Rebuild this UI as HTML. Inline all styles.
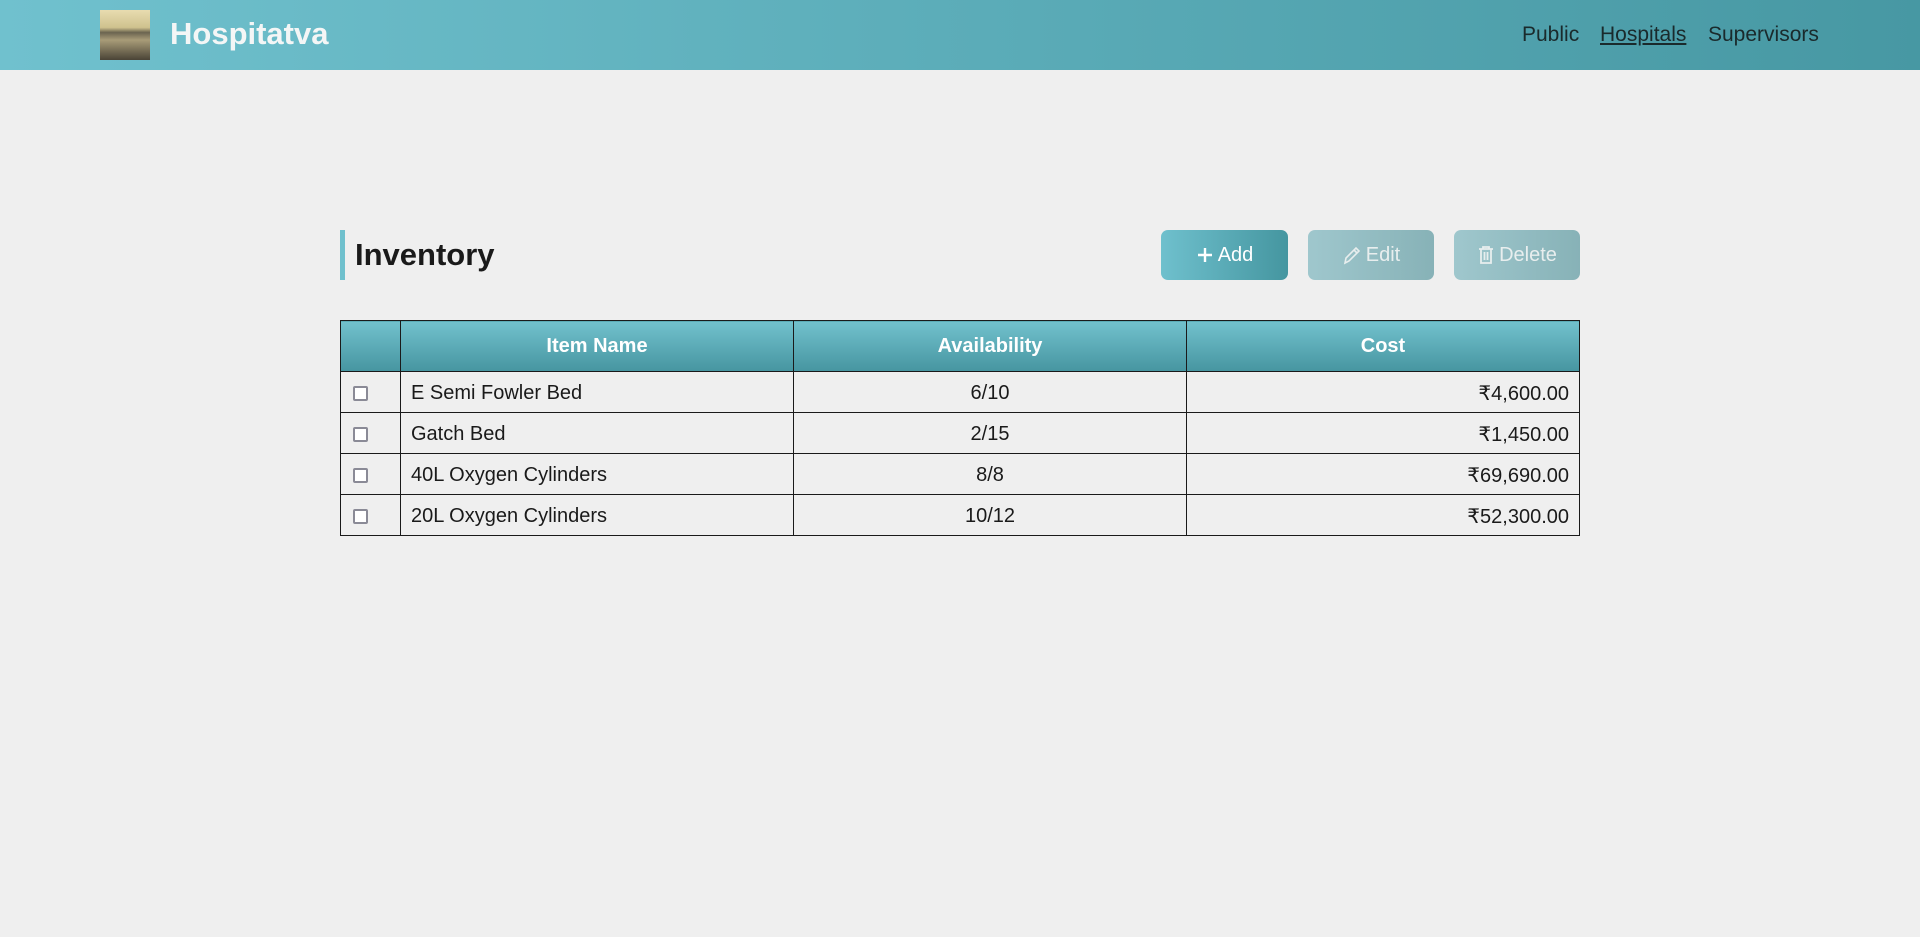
<!DOCTYPE html>
<html><head><meta charset="utf-8"><style>
*{box-sizing:border-box;margin:0;padding:0}
body{width:1920px;height:937px;background:#efefef;font-family:"Liberation Sans",sans-serif;color:#1a1a1a;position:relative;overflow:hidden}
.hdr{position:absolute;left:0;top:0;width:1920px;height:70px;background:linear-gradient(90deg,#70c1ce,#4798a3)}
.logo{position:absolute;left:100px;top:10px;width:50px;height:50px;background:linear-gradient(180deg,#e8dcb0 0%,#cfc28e 35%,#6b6450 45%,#a89c78 60%,#4a4436 100%)}
.title{position:absolute;left:170px;top:16px;font-size:31px;font-weight:bold;color:#f4f6f6}
.nav{position:absolute;top:23px;font-size:21px;color:#1a2a2c}
.bar{position:absolute;left:340px;top:230px;width:5px;height:50px;background:#6fc0cd}
h1{position:absolute;left:355px;top:237px;font-size:31px;font-weight:bold;color:#1a1a1a}
.btn{position:absolute;top:230px;height:50px;border-radius:7px;color:#fff;font-size:20px;display:flex;align-items:center;justify-content:center;gap:4px}
.add{left:1161px;width:127px;background:linear-gradient(90deg,#6fc0cd,#4596a0)}
.dis{background:linear-gradient(90deg,#9fc7cd,#87b2b7);color:#e8eeee}
table{position:absolute;left:340px;top:320px;width:1240px;border-collapse:collapse;font-size:20px}
td,th{border:1.5px solid #1a1a1a;height:41px}
th{height:51px;background:linear-gradient(180deg,#72c1cd,#4695a0);color:#fff;font-weight:bold}
td{padding:2px 10px 0}
.cb{display:inline-block;width:15px;height:15px;border:2px solid #8a8a96;border-radius:2px;background:#fff;vertical-align:middle;margin-left:2px}
</style></head><body>
<div class="hdr">
<div class="logo"></div>
<div class="title">Hospitatva</div>
<div class="nav" style="left:1522px">Public</div>
<div class="nav" style="left:1600px;text-decoration:underline">Hospitals</div>
<div class="nav" style="left:1708px">Supervisors</div>
</div>
<div class="bar"></div>
<h1>Inventory</h1>
<div class="btn add"><svg width="18" height="18" viewBox="0 0 18 18"><path d="M9 2v14M2 9h14" stroke="#fff" stroke-width="2.4"/></svg>Add</div>
<div class="btn dis" style="left:1308px;width:126px"><svg width="20" height="20" viewBox="0 0 20 20"><path d="M3 18l1-5L14 3l3 3L7 16z M12 5l3 3" fill="none" stroke="#e8eeee" stroke-width="1.6"/></svg>Edit</div>
<div class="btn dis" style="left:1454px;width:126px"><svg width="18" height="20" viewBox="0 0 18 20"><path d="M2 4h14M6 4V2h6v2M4 4v14h10V4M7.5 7v8M10.5 7v8" fill="none" stroke="#e8eeee" stroke-width="1.8"/></svg>Delete</div>
<table>
<tr><th style="width:60px"></th><th style="width:393px">Item Name</th><th style="width:393px">Availability</th><th>Cost</th></tr>
<tr><td><span class="cb"></span></td><td>E Semi Fowler Bed</td><td style="text-align:center">6/10</td><td style="text-align:right">₹4,600.00</td></tr>
<tr><td><span class="cb"></span></td><td>Gatch Bed</td><td style="text-align:center">2/15</td><td style="text-align:right">₹1,450.00</td></tr>
<tr><td><span class="cb"></span></td><td>40L Oxygen Cylinders</td><td style="text-align:center">8/8</td><td style="text-align:right">₹69,690.00</td></tr>
<tr><td><span class="cb"></span></td><td>20L Oxygen Cylinders</td><td style="text-align:center">10/12</td><td style="text-align:right">₹52,300.00</td></tr>
</table>
</body></html>
